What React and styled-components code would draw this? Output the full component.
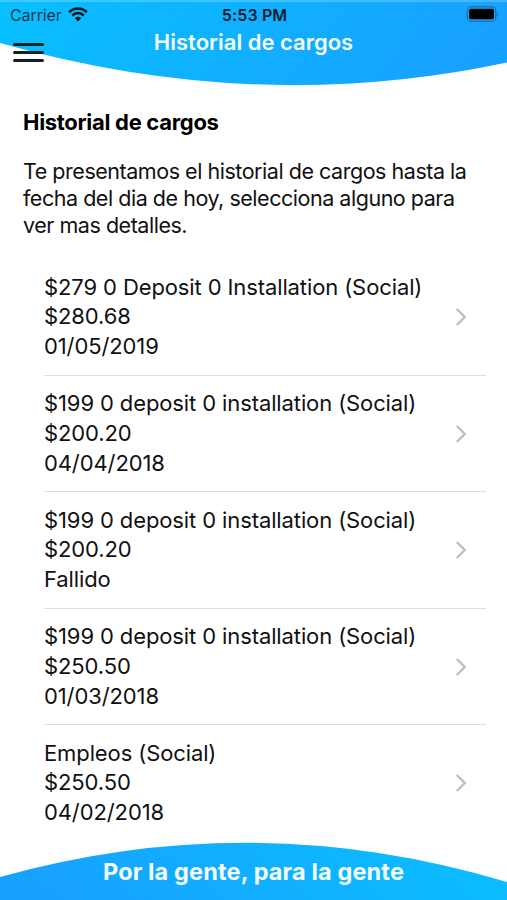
import styled, { createGlobalStyle } from "styled-components";

const GlobalStyle = createGlobalStyle`
  * {
    box-sizing: border-box;
  }

  body {
    margin: 0;
    background-color: white;
    font-family: Inter, "Liberation Sans", sans-serif;
    color: #111;
  }
`;

const Container = styled.div`
  width: 507px;
  height: 900px;
  display: flex;
  flex-direction: column;
  overflow: hidden;
`;

const Header = styled.header`
  position: relative;
  height: 88px;
  flex-shrink: 0;
`;

const Curve = styled.svg`
  position: absolute;
  top: 0;
  left: 0;
  z-index: -1;
`;

const StatusBar = styled.div`
  height: 29px;
  padding: 0 8px 0 10px;
  display: grid;
  grid-template-columns: 1fr auto 1fr;
  align-items: center;
`;

const Carrier = styled.div`
  display: flex;
  align-items: center;
  gap: 6px;
  font-size: 16px;
  letter-spacing: -0.1px;
  color: #073a52;
`;

const Time = styled.span`
  margin-top: 1px;
  font-size: 16px;
  font-weight: 600;
  letter-spacing: 0.15px;
  color: #04202f;
`;

const Battery = styled.svg`
  justify-self: end;
  margin-top: -1px;
`;

const NavBar = styled.div`
  height: 28px;
  padding: 0 13px;
  display: grid;
  grid-template-columns: 31px 1fr 31px;
  align-items: start;
`;

const MenuButton = styled.button`
  height: 19px;
  margin-top: 14px;
  padding: 0;
  border: none;
  background: none;
  display: flex;
  flex-direction: column;
  justify-content: space-between;
  cursor: pointer;
`;

const Bar = styled.span`
  width: 31px;
  height: 2.6px;
  border-radius: 2px;
  background-color: #142026;
`;

const Title = styled.h1`
  margin: 0;
  text-align: center;
  font-size: 22px;
  line-height: 27px;
  font-weight: 600;
  color: #f2fcff;
`;

const Slogan = styled.p`
  margin: 0;
  text-align: center;
  font-size: 23.5px;
  line-height: 27px;
  font-weight: 700;
  letter-spacing: 0.14px;
  color: #f2fcff;
`;

const Intro = styled.section`
  padding: 21px 23px 0;
`;

const Heading = styled.h2`
  margin: 0 0 22px;
  font-size: 22px;
  line-height: 27px;
  font-weight: 700;
  letter-spacing: -0.3px;
  color: black;
`;

const Desc = styled.p`
  margin: 0;
  font-size: 21.5px;
  line-height: 27px;
  letter-spacing: -0.47px;
  white-space: pre;
`;

const List = styled.ul`
  margin: 20px 21px 0 44px;
  padding: 0;
  list-style: none;
`;

const Item = styled.li`
  height: 116.5px;
  padding: 1px 19px 0 0;
  display: flex;
  align-items: center;
  justify-content: space-between;
  border-bottom: 1.5px solid #dfdfe1;

  &:last-child {
    border-bottom-color: transparent;
  }
`;

const Info = styled.div`
  font-size: 22px;
  line-height: 29.6px;
  letter-spacing: -0.11px;
  white-space: nowrap;
`;

const Footer = styled.footer`
  position: relative;
  height: 60px;
  margin-top: auto;
  flex-shrink: 0;
  padding-top: 16px;
`;

const charges = [
  { name: "$279 0 Deposit 0 Installation (Social)", amount: "$280.68", status: "01/05/2019" },
  { name: "$199 0 deposit 0 installation (Social)", amount: "$200.20", status: "04/04/2018" },
  { name: "$199 0 deposit 0 installation (Social)", amount: "$200.20", status: "Fallido" },
  { name: "$199 0 deposit 0 installation (Social)", amount: "$250.50", status: "01/03/2018" },
  { name: "Empleos (Social)", amount: "$250.50", status: "04/02/2018" },
];

const WifiIcon = () => (
  <svg width="20" height="15" viewBox="0 0 20 15" fill="none" stroke="#00151f">
    <path d="M1.2 5.2C6.2 0.3 13.8 0.3 18.8 5.2" strokeWidth="2.6" />
    <path d="M4.3 8.5C7.6 5.3 12.4 5.3 15.7 8.5" strokeWidth="2.5" />
    <path d="M6.9 11.2C8.7 9.4 11.3 9.4 13.1 11.2L10 14.4Z" fill="#00151f" stroke="none" />
  </svg>
);

const Chevron = () => (
  <svg width="12" height="20" viewBox="0 0 12 20" fill="none">
    <path d="M1.8 2L9.8 10L1.8 18" stroke="#bdbdc0" strokeWidth="2.3" />
  </svg>
);

const App = () => {
  return (
    <>
      <GlobalStyle />
      <Container>
        <Header>
          <Curve width="507" height="88" viewBox="0 0 507 88">
            <defs>
              <linearGradient id="top" x1="0" y1="0" x2="1" y2="0.15">
                <stop offset="0" stopColor="#08c0ff" />
                <stop offset="1" stopColor="#18a2ff" />
              </linearGradient>
            </defs>
            <path d="M0 0H507V62.5Q256 116 0 43Z" fill="url(#top)" />
            <path d="M0 0H507V2H0Z" fill="white" fillOpacity="0.2" />
          </Curve>
          <StatusBar>
            <Carrier>
              Carrier
              <WifiIcon />
            </Carrier>
            <Time>5:53 PM</Time>
            <Battery width="33" height="16" viewBox="0 0 33 16">
              <rect x="1.2" y="0.8" width="28.6" height="14.4" rx="4" fill="none" stroke="#1677b5" strokeWidth="1.4" />
              <rect x="3" y="2.8" width="25" height="10.4" rx="2" fill="black" />
              <path d="M31 5.5Q33.5 8 31 10.5Z" fill="#1677b5" />
            </Battery>
          </StatusBar>
          <NavBar>
            <MenuButton aria-label="Menu">
              <Bar />
              <Bar />
              <Bar />
            </MenuButton>
            <Title>Historial de cargos</Title>
          </NavBar>
        </Header>
        <Intro>
          <Heading>Historial de cargos</Heading>
          <Desc>
            {"Te presentamos el historial de cargos hasta la\nfecha del dia de hoy, selecciona alguno para\nver mas detalles."}
          </Desc>
        </Intro>
        <List>
          {charges.map((charge, i) => (
            <Item key={i}>
              <Info>
                <div>{charge.name}</div>
                <div>{charge.amount}</div>
                <div>{charge.status}</div>
              </Info>
              <Chevron />
            </Item>
          ))}
        </List>
        <Footer>
          <Curve width="507" height="60" viewBox="0 0 507 60">
            <defs>
              <linearGradient id="bottom" x1="0" y1="0.15" x2="1" y2="0">
                <stop offset="0" stopColor="#18a2ff" />
                <stop offset="1" stopColor="#08c0ff" />
              </linearGradient>
            </defs>
            <path d="M0 60V35Q253 -36 507 40V60Z" fill="url(#bottom)" />
          </Curve>
          <Slogan>Por la gente, para la gente</Slogan>
        </Footer>
      </Container>
    </>
  );
};

export default App;
